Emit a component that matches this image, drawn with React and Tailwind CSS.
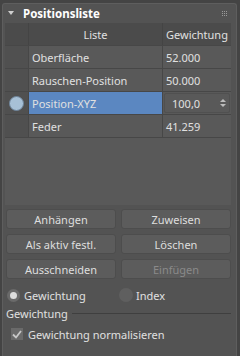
import React from "react";

const F = { fontFamily: '"Noto Sans", "Open Sans", sans-serif' };

function Row({ name, value, selected }) {
  return (
    <div className="flex h-[23px] border-t border-[#474747]">
      <div className="w-[24px] shrink-0 bg-[#505050] border-r border-[#474747] flex items-center justify-center">
        {selected && (
          <div className="w-[15px] h-[15px] rounded-full bg-[#a7c0d6] border border-[#6d8399]" />
        )}
      </div>
      <div
        className={
          "w-[134px] shrink-0 flex items-center pl-[3px] border-r border-[#474747] " +
          (selected ? "bg-[#5b87c1]" : "bg-[#595959]")
        }
      >
        {name}
      </div>
      {selected ? (
        <div className="flex-1 bg-[#595959] p-[1px]">
          <div className="h-full flex items-center bg-[#595959] border border-[#505050] rounded-[2px] pl-[7px] pr-[3px]">
            <span className="flex-1">100,0</span>
            <svg width="6" height="10" viewBox="0 0 6 10">
              <path d="M0 4 L3 1 L6 4 Z" fill="#bdbdbd" />
              <path d="M0 6 L3 9 L6 6 Z" fill="#bdbdbd" />
            </svg>
          </div>
        </div>
      ) : (
        <div className="flex-1 bg-[#595959] flex items-center pl-[3px]">{value}</div>
      )}
    </div>
  );
}

function Btn({ children, disabled }) {
  return (
    <div
      className={
        "h-[20px] rounded-[3px] bg-[#5c5c5c] border border-[#4d4d4d] flex items-center justify-center " +
        (disabled ? "text-[#8a8a8a]" : "text-[#dedede]")
      }
    >
      {children}
    </div>
  );
}

export default function App() {
  return (
    <div
      className="w-[240px] h-[356px] bg-[#444444] overflow-hidden text-[11px] text-[#e0e0e0] leading-none"
      style={F}
    >
      <div className="ml-[2px] mt-[3px] w-[235px] h-[360px] bg-[#535353] border-l border-t border-r border-[#5e5e5e] rounded-t-[3px] flex flex-col">
        <div className="h-[19px] flex items-center pl-[5px] pr-[9px] relative">
          <svg width="6" height="5" viewBox="0 0 6 5" className="mr-[9px]">
            <path d="M0 0 L6 0 L3 4 Z" fill="#cfcfcf" />
          </svg>
          <span className="font-bold text-white text-[11.5px]">Positionsliste</span>
          <div className="ml-auto grid grid-cols-3 gap-[1px]">
            {Array.from({ length: 9 }).map((_, i) => (
              <div key={i} className="w-[1px] h-[1px] bg-[#9a9a9a]" />
            ))}
          </div>
        </div>
        <div className="ml-[2px] w-[226px] h-[182px] bg-[#595959] flex flex-col">
          <div className="flex h-[22px] bg-[#4b4b4b]">
            <div className="w-[24px] shrink-0 border-r border-[#444]" />
            <div className="w-[134px] shrink-0 flex items-center justify-center border-r border-[#444]">
              Liste
            </div>
            <div className="flex-1 flex items-center justify-center">Gewichtung</div>
          </div>
          <Row name="Oberfläche" value="52.000" />
          <Row name="Rauschen-Position" value="50.000" />
          <Row name="Position-XYZ" selected />
          <Row name="Feder" value="41.259" />
          <div className="flex-1 border-t border-[#474747]" />
        </div>
        <div className="ml-[3px] mt-[4px] w-[225px] grid grid-cols-2 gap-x-[5px] gap-y-[5px]">
          <Btn>Anhängen</Btn>
          <Btn>Zuweisen</Btn>
          <Btn>Als aktiv festl.</Btn>
          <Btn>Löschen</Btn>
          <Btn>Ausschneiden</Btn>
          <Btn disabled>Einfügen</Btn>
        </div>
        <div className="mt-[9px] flex items-center h-[14px] ml-[4px]">
          <div className="w-[13px] h-[13px] rounded-full bg-[#dcdcdc] border-[3px] border-[#6a6a6a]" />
          <span className="ml-[4px] w-[95px]">Gewichtung</span>
          <div className="w-[14px] h-[14px] rounded-full bg-[#5f5f5f]" />
          <span className="ml-[3px]">Index</span>
        </div>
        <div className="mt-[6px] flex items-center ml-[3px] mr-[5px]">
          <span>Gewichtung</span>
          <div className="flex-1 h-[1px] bg-[#3f3f3f] ml-[4px]" />
        </div>
        <div className="mt-[9px] flex items-center ml-[8px]">
          <div className="w-[12px] h-[12px] bg-[#6a6a6a] flex items-center justify-center">
            <svg width="10" height="9" viewBox="0 0 10 9">
              <path d="M1 4.5 L4 7.5 L9 1" stroke="#c8c8c8" strokeWidth="1.8" fill="none" />
            </svg>
          </div>
          <span className="ml-[5px]">Gewichtung normalisieren</span>
        </div>
      </div>
    </div>
  );
}
